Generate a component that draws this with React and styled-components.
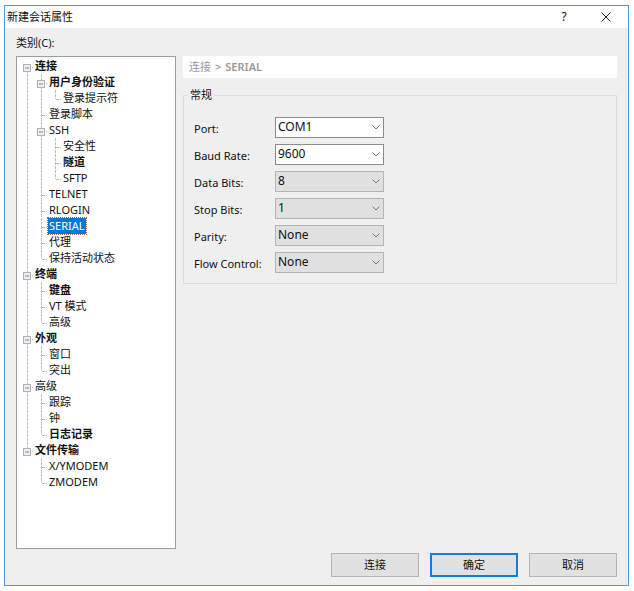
import React, { useState } from 'react';
import styled, { createGlobalStyle } from 'styled-components';

const GlobalStyle = createGlobalStyle`
  * {
    box-sizing: border-box;
  }

  body {
    margin: 0;
    background: #fff;
  }

  body, button, select {
    font-family: "Noto Sans", "Noto Sans CJK SC", sans-serif;
    font-size: 11px;
    line-height: 16px;
    color: #111;
  }
`;

const Desktop = styled.div`
  display: flex;
  min-height: 100vh;
  padding: 5px 5px 5px 4px;
`;

const Dialog = styled.div`
  flex: 1;
  display: flex;
  flex-direction: column;
  min-width: 0;
  border: 1px solid #4a9ee0;
  background: #efefef;
`;

const TitleBar = styled.header`
  display: flex;
  align-items: center;
  height: 22px;
  padding: 0 1px 0 2px;
  background: #fff;
`;

const Title = styled.h1`
  flex: 1;
  margin: 0;
  font-size: 11px;
  font-weight: 400;
`;

const TitleButton = styled.button`
  display: flex;
  align-items: center;
  justify-content: center;
  width: 42px;
  height: 22px;
  padding: 0;
  border: 0;
  background: transparent;
  font-size: 12px;
`;

const Body = styled.div`
  flex: 1;
  display: grid;
  grid-template-columns: 160px 1fr;
  grid-template-rows: 28px 1fr;
  column-gap: 7px;
  padding: 0 11px;
`;

const CategoryLabel = styled.div`
  grid-column: 1 / -1;
  padding-top: 7px;
`;

const Tree = styled.ul`
  margin: 0;
  padding: 1px 3px;
  list-style: none;
  border: 1px solid #9a9da6;
  background: #fff;
`;

const Branch = styled.ul`
  margin: 0;
  padding: 0;
  list-style: none;
`;

const TreeRow = styled.div`
  display: flex;
  height: 16px;
`;

const GuideSvg = styled.svg`
  flex: none;
  display: block;
  width: 14px;
  height: 16px;
`;

const Toggle = styled.button`
  flex: none;
  display: block;
  width: 14px;
  height: 16px;
  padding: 0;
  border: 0;
  background: transparent;
`;

const NodeLabel = styled.button`
  height: 16px;
  padding: 0 1px;
  border: 0;
  font-weight: ${props => props.$bold ? 700 : 400};
  color: ${props => props.$selected ? '#fff' : '#111'};
  background: ${props => props.$selected ? '#0078d7' : 'transparent'};
  outline: ${props => props.$selected ? '1px dotted #a8602c' : 'none'};
  white-space: nowrap;
`;

const Panel = styled.main`
  min-width: 0;
`;

const Breadcrumb = styled.div`
  display: flex;
  gap: 4px;
  height: 22px;
  padding: 3px 6px;
  background: #fff;
  color: #999;
  font-weight: 600;
`;

const Crumb = styled.span`
  font-weight: 400;
`;

const Group = styled.fieldset`
  display: grid;
  row-gap: 6px;
  min-width: 0;
  margin: 10px 0 0;
  padding: 15px 10px 10px;
  border: 1px solid #dcdcdc;
`;

const Legend = styled.legend`
  margin-left: -6px;
  padding: 0 2px;
  line-height: 14px;
`;

const Field = styled.div`
  display: grid;
  grid-template-columns: 81px 109px;
  align-items: center;
`;

const FieldLabel = styled.label`
  padding-top: 3px;
`;

const SelectBox = styled.div`
  display: grid;
  align-items: center;

  > * {
    grid-area: 1 / 1;
  }
`;

const Select = styled.select`
  appearance: none;
  width: 100%;
  height: 21px;
  padding: 0 20px 1px 2px;
  border: 1px solid ${props => props.$editable ? '#8c8c8c' : '#b4b4b4'};
  border-radius: 0;
  background: ${props => props.$editable ? '#fff' : '#e0e0e0'};
  font-size: 12px;
`;

const Chevron = styled.svg`
  justify-self: end;
  width: 8px;
  height: 5px;
  margin-right: 4px;
  pointer-events: none;
`;

const Footer = styled.footer`
  display: flex;
  justify-content: flex-end;
  gap: 11px;
  padding: 4px 11px 8px;
`;

const Button = styled.button`
  width: 88px;
  height: 24px;
  padding: 0;
  border: ${props => props.$primary ? '2px solid #0f7fd9' : '1px solid #b5b5b5'};
  background: #e1e1e1;
`;

const categories = [
  {
    name: '连接', bold: true, children: [
      { name: '用户身份验证', bold: true, children: [{ name: '登录提示符' }] },
      { name: '登录脚本' },
      { name: 'SSH', children: [{ name: '安全性' }, { name: '隧道', bold: true }, { name: 'SFTP' }] },
      { name: 'TELNET' },
      { name: 'RLOGIN' },
      { name: 'SERIAL' },
      { name: '代理' },
      { name: '保持活动状态' },
    ],
  },
  { name: '终端', bold: true, children: [{ name: '键盘', bold: true }, { name: 'VT 模式' }, { name: '高级' }] },
  { name: '外观', bold: true, children: [{ name: '窗口' }, { name: '突出' }] },
  { name: '高级', children: [{ name: '跟踪' }, { name: '钟' }, { name: '日志记录', bold: true }] },
  { name: '文件传输', bold: true, children: [{ name: 'X/YMODEM' }, { name: 'ZMODEM' }] },
];

const fields = [
  { id: 'port', label: 'Port:', editable: true, options: ['COM1', 'COM2', 'COM3', 'COM4'] },
  { id: 'baud', label: 'Baud Rate:', editable: true, options: ['9600', '19200', '38400', '115200'] },
  { id: 'data', label: 'Data Bits:', options: ['8', '7', '6', '5'] },
  { id: 'stop', label: 'Stop Bits:', options: ['1', '2'] },
  { id: 'parity', label: 'Parity:', options: ['None', 'Odd', 'Even'] },
  { id: 'flow', label: 'Flow Control:', options: ['None', 'XON/XOFF', 'RTS/CTS'] },
];

// One cell of the dotted tree lines: up, down and right are the arms that are drawn
const Guide = ({ up, down, right, box, open }) => (
  <GuideSvg viewBox="0 0 14 16" aria-hidden="true">
    <g stroke="#bdbdbd" strokeDasharray="3 1" fill="none">
      {up && <path d="M7.5 0V9" />}
      {down && <path d="M7.5 8V16" />}
      {right && <path d="M8 9.5H13" />}
    </g>
    {box && (
      <>
        <rect x="3.5" y="6.5" width="7" height="7" fill="#f0f0f0" stroke="#b0b0b0" />
        <path d="M5 10H9" stroke="#6f88c4" />
        {!open && <path d="M7 8V12" stroke="#6f88c4" />}
      </>
    )}
  </GuideSvg>
);

const TreeNode = ({ node, parents, first, last, selected, onSelect }) => {
  const [open, setOpen] = useState(true);
  const guide = (
    <Guide up={!first} down={!last} right box={Boolean(node.children)} open={open} />
  );

  return (
    <li>
      <TreeRow>
        {parents.map((line, i) => <Guide key={i} up={line} down={line} />)}
        {node.children
          ? <Toggle aria-label={node.name} aria-expanded={open} onClick={() => setOpen(!open)}>{guide}</Toggle>
          : guide}
        <NodeLabel
          $bold={node.bold}
          $selected={selected === node.name}
          onClick={() => onSelect(node.name)}
        >
          {node.name}
        </NodeLabel>
      </TreeRow>
      {node.children && open && (
        <Branch>
          {node.children.map((child, i) => (
            <TreeNode
              key={child.name}
              node={child}
              parents={[...parents, !last]}
              last={i === node.children.length - 1}
              selected={selected}
              onSelect={onSelect}
            />
          ))}
        </Branch>
      )}
    </li>
  );
};

const App = () => {
  const [selected, setSelected] = useState('SERIAL');

  return (
    <>
      <GlobalStyle />
      <Desktop>
        <Dialog role="dialog" aria-labelledby="dialog-title">
          <TitleBar>
            <Title id="dialog-title">新建会话属性</Title>
            <TitleButton>?</TitleButton>
            <TitleButton aria-label="关闭">
              <svg width="10" height="10" viewBox="0 0 10 10" stroke="#222" fill="none">
                <path d="M.5 .5L9.5 9.5M9.5 .5L.5 9.5" />
              </svg>
            </TitleButton>
          </TitleBar>
          <Body>
            <CategoryLabel id="category-label">类别(C):</CategoryLabel>
            <Tree aria-labelledby="category-label">
              {categories.map((node, i) => (
                <TreeNode
                  key={node.name}
                  node={node}
                  parents={[]}
                  first={i === 0}
                  last={i === categories.length - 1}
                  selected={selected}
                  onSelect={setSelected}
                />
              ))}
            </Tree>
            <Panel>
              <Breadcrumb>
                <Crumb>连接</Crumb>
                <span>&gt;</span>
                <span>SERIAL</span>
              </Breadcrumb>
              <Group>
                <Legend>常规</Legend>
                {fields.map(field => (
                  <Field key={field.id}>
                    <FieldLabel htmlFor={field.id}>{field.label}</FieldLabel>
                    <SelectBox>
                      <Select id={field.id} $editable={field.editable}>
                        {field.options.map(option => <option key={option}>{option}</option>)}
                      </Select>
                      <Chevron viewBox="0 0 8 5" fill="none" stroke="#777">
                        <path d="M.5 .5L4 4L7.5 .5" />
                      </Chevron>
                    </SelectBox>
                  </Field>
                ))}
              </Group>
            </Panel>
          </Body>
          <Footer>
            <Button>连接</Button>
            <Button $primary>确定</Button>
            <Button>取消</Button>
          </Footer>
        </Dialog>
      </Desktop>
    </>
  );
};

export default App;
